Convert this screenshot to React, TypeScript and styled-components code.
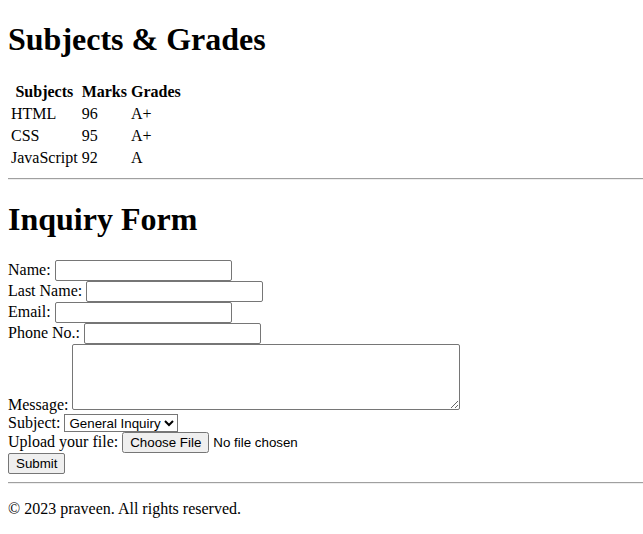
import React from "react";
import styled, { createGlobalStyle } from "styled-components";

const GlobalStyle = createGlobalStyle`
  body {
    margin: 0;
    padding: 0 0 0 8px;
    font-family: "Liberation Serif", "Times New Roman", serif;
    font-size: 16px;
    color: #000;
    background: #fff;
  }
`;

const Title = styled.h1`
  font-size: 32px;
  font-weight: bold;
  margin: 21.44px 0;
`;

const GradesTable = styled.table`
  border-spacing: 2px;
  border-collapse: separate;
`;

const HeadCell = styled.th`
  padding: 1px;
  font-weight: bold;
  text-align: center;
`;

const Cell = styled.td`
  padding: 1px;
`;

const Rule = styled.hr`
  margin: 8px 0;
  border-style: solid;
  border-width: 1px 0;
  border-color: #a0a0a0 transparent #eeeeee transparent;
  height: 0;
`;

const InquiryForm = styled.form`
  margin: 0;
`;

const fieldFont = `font-family: "Liberation Sans", Arial, sans-serif; font-size: 13.33px;`;

const TextInput = styled.input<{ $w: number }>`
  box-sizing: border-box;
  width: ${(p) => p.$w}px;
  height: 21px;
  padding: 1px 2px;
  border: 1px solid #767676;
  border-radius: 2px;
  ${fieldFont}
  vertical-align: baseline;
`;

const MessageArea = styled.textarea`
  box-sizing: border-box;
  width: 388px;
  height: 66px;
  border: 1px solid #767676;
  border-radius: 2px;
  padding: 2px;
  ${fieldFont}
  vertical-align: baseline;
  resize: both;
`;

const SubjectSelect = styled.select`
  ${fieldFont}
  box-sizing: border-box;
  height: 18px;
  border: 1px solid #767676;
  border-radius: 0;
  background: #fff;
  color: #000;
  padding: 0;
`;

const FileInput = styled.input`
  ${fieldFont}
`;

const SubmitButton = styled.button`
  ${fieldFont}
  box-sizing: border-box;
  height: 21px;
  padding: 1px 7px;
  border: 1px solid #767676;
  border-radius: 2px;
  background: #efefef;
  color: #000;
`;

const Footer = styled.footer`
  margin: 0;
`;

const FooterText = styled.p`
  margin: 16px 0;
`;

const grades = [
  { subject: "HTML", marks: 96, grade: "A+" },
  { subject: "CSS", marks: 95, grade: "A+" },
  { subject: "JavaScript", marks: 92, grade: "A" },
];

export default function App() {
  return (
    <>
      <GlobalStyle />
      <Title>Subjects &amp; Grades</Title>
      <GradesTable>
        <thead>
          <tr>
            <HeadCell>Subjects</HeadCell>
            <HeadCell>Marks</HeadCell>
            <HeadCell>Grades</HeadCell>
          </tr>
        </thead>
        <tbody>
          {grades.map((g) => (
            <tr key={g.subject}>
              <Cell>{g.subject}</Cell>
              <Cell>{g.marks}</Cell>
              <Cell>{g.grade}</Cell>
            </tr>
          ))}
        </tbody>
      </GradesTable>
      <Rule />
      <Title>Inquiry Form</Title>
      <InquiryForm onSubmit={(e) => e.preventDefault()}>
        <label htmlFor="name">Name: </label>
        <TextInput id="name" type="text" $w={177} />
        <br />
        <label htmlFor="lname">Last Name: </label>
        <TextInput id="lname" type="text" $w={177} />
        <br />
        <label htmlFor="email">Email: </label>
        <TextInput id="email" type="email" $w={177} />
        <br />
        <label htmlFor="phone">Phone No.: </label>
        <TextInput id="phone" type="tel" $w={177} />
        <br />
        <label htmlFor="msg">Message: </label>
        <MessageArea id="msg" />
        <br />
        <label htmlFor="subject">Subject: </label>
        <SubjectSelect id="subject" defaultValue="general">
          <option value="general">General Inquiry</option>
          <option value="support">Support</option>
          <option value="feedback">Feedback</option>
        </SubjectSelect>
        <br />
        <label htmlFor="file">Upload your file: </label>
        <FileInput id="file" type="file" />
        <br />
        <SubmitButton type="submit">Submit</SubmitButton>
      </InquiryForm>
      <Footer>
        <Rule />
        <FooterText>© 2023 praveen. All rights reserved.</FooterText>
      </Footer>
    </>
  );
}
